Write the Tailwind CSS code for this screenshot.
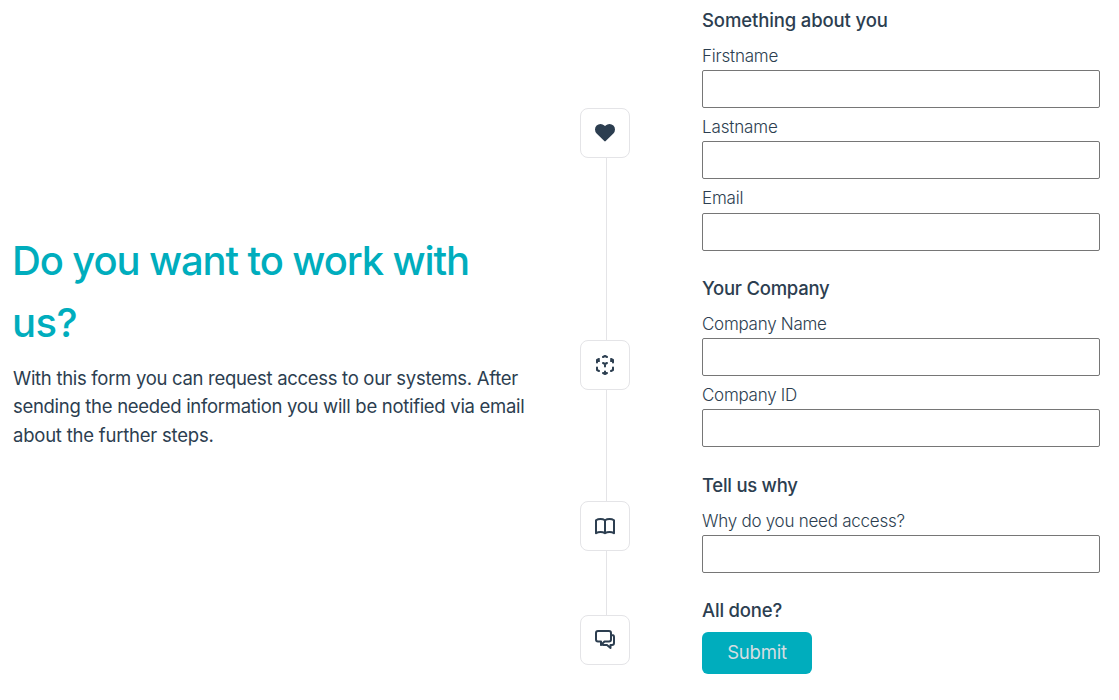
<!DOCTYPE html>
<html lang="en">
<head>
<meta charset="utf-8">
<title>Request access</title>
<script src="https://cdn.jsdelivr.net/npm/@tailwindcss/browser@4"></script>
</head>
<body class="bg-white text-[#2c3e50] font-[Inter,sans-serif]">
<main class="flex w-[1119px] h-[700px] overflow-hidden">
  <section class="w-[580px] pl-[13px] pt-[230px] whitespace-nowrap">
    <h1 class="-ml-px text-[40px] leading-[62px] font-medium tracking-[-1.12px] text-[#00adbd]"><span class="block">Do you want to work with</span><span class="block tracking-[-0.5px]">us?</span></h1>
    <p class="mt-[10px] text-[18.5px] leading-[28.4px] tracking-[-0.3px]"><span class="block">With this form you can request access to our systems. After</span><span class="block">sending the needed information you will be notified via email</span><span class="block tracking-[-0.22px]">about the further steps.</span></p>
  </section>

  <div class="w-[50px] pt-[108px] flex flex-col items-center">
    <div class="size-[50px] shrink-0 rounded-lg border border-[#e4e4e7] flex items-center justify-center">
      <svg class="size-6 mb-0.5" viewBox="0 0 24 24" fill="currentColor" stroke="currentColor" stroke-width="2" stroke-linecap="round" stroke-linejoin="round"><path d="M4.318 6.318a4.5 4.5 0 000 6.364L12 20.364l7.682-7.682a4.5 4.5 0 00-6.364-6.364L12 7.636l-1.318-1.318a4.5 4.5 0 00-6.364 0z"/></svg>
    </div>
    <div class="w-px h-[182px] shrink-0 ml-[3px] bg-[#e4e4e7]"></div>
    <div class="size-[50px] shrink-0 rounded-lg border border-[#e4e4e7] flex items-center justify-center">
      <svg class="size-6" viewBox="0 0 24 24" fill="none" stroke="currentColor" stroke-width="2" stroke-linecap="round" stroke-linejoin="round"><path d="M14 10l-2 1m0 0l-2-1m2 1v2.5M20 7l-2 1m2-1l-2-1m2 1v2.5M14 4l-2-1-2 1M4 7l2-1M4 7l2 1M4 7v2.5M12 21l-2-1m2 1l2-1m-2 1v-2.5M6 18l-2-1v-2.5M18 18l2-1v-2.5"/></svg>
    </div>
    <div class="w-px h-[111px] shrink-0 ml-[3px] bg-[#e4e4e7]"></div>
    <div class="size-[50px] shrink-0 rounded-lg border border-[#e4e4e7] flex items-center justify-center">
      <svg class="size-6" viewBox="0 0 24 24" fill="none" stroke="currentColor" stroke-width="2" stroke-linecap="round" stroke-linejoin="round"><path d="M12 6.253v13m0-13C10.832 5.477 9.246 5 7.5 5S4.168 5.477 3 6.253v13C4.168 18.477 5.754 18 7.5 18s3.332.477 4.5 1.253m0-13C13.168 5.477 14.754 5 16.5 5c1.747 0 3.332.477 4.5 1.253v13C19.832 18.477 18.247 18 16.5 18c-1.746 0-3.332.477-4.5 1.253"/></svg>
    </div>
    <div class="w-px h-16 shrink-0 ml-[3px] bg-[#e4e4e7]"></div>
    <div class="size-[50px] shrink-0 rounded-lg border border-[#e4e4e7] flex items-center justify-center">
      <svg class="size-6 mb-0.5" viewBox="0 0 24 24" fill="none" stroke="currentColor" stroke-width="2" stroke-linecap="round" stroke-linejoin="round"><path d="M5 4h11a2 2 0 012 2v6.500a2 2 0 01-2 2h-4.500L8 18v-3.500H5a2 2 0 01-2-2V6a2 2 0 012-2zM18 8h1a2 2 0 012 2v6a2 2 0 01-2 2h-1.500v3L14 18h-3.500L8.500 17.500"/></svg>
    </div>
  </div>

  <form class="ml-[72px] w-[398px] pt-[6px] flex flex-col">
    <h2 class="h-[36px] text-[18.5px] leading-[28px] font-medium tracking-[-0.12px]">Something about you</h2>
    <label class="h-[28px] text-[17px] leading-[28px] font-light tracking-[-0.2px]" for="first">Firstname</label>
    <input id="first" class="h-[38px] shrink-0 border border-[#767676] rounded-[2px]">
    <label class="mt-[5px] h-[28px] text-[17px] leading-[28px] font-light tracking-[-0.15px]" for="last">Lastname</label>
    <input id="last" class="h-[38px] shrink-0 border border-[#767676] rounded-[2px]">
    <label class="mt-[5px] h-[29px] text-[17px] leading-[28px] font-light tracking-[-0.2px]" for="email">Email</label>
    <input id="email" class="h-[38px] shrink-0 border border-[#767676] rounded-[2px]">
    <h2 class="mt-[23px] h-[36px] text-[18.5px] leading-[28px] font-medium tracking-[-0.25px]">Your Company</h2>
    <label class="h-[28px] text-[17px] leading-[28px] font-light tracking-[-0.27px]" for="company">Company Name</label>
    <input id="company" class="h-[38px] shrink-0 border border-[#767676] rounded-[2px]">
    <label class="mt-[5px] h-[28px] text-[17px] leading-[28px] font-light tracking-[-0.27px]" for="cid">Company ID</label>
    <input id="cid" class="h-[38px] shrink-0 border border-[#767676] rounded-[2px]">
    <h2 class="mt-[24px] h-[36px] text-[18.5px] leading-[28px] font-medium tracking-[-0.27px]">Tell us why</h2>
    <label class="h-[28px] text-[17px] leading-[28px] font-light tracking-[-0.25px]" for="why">Why do you need access?</label>
    <input id="why" class="h-[38px] shrink-0 border border-[#767676] rounded-[2px]">
    <h2 class="mt-[23px] h-[36px] text-[18.5px] leading-[28px] font-medium tracking-[-0.2px]">All done?</h2>
    <button type="button" class="w-[110px] h-[42px] shrink-0 rounded-md bg-[#00adbd] text-[#d5dde2] text-[18.5px] font-normal tracking-[-0.2px]">Submit</button>
  </form>
</main>
</body>
</html>
